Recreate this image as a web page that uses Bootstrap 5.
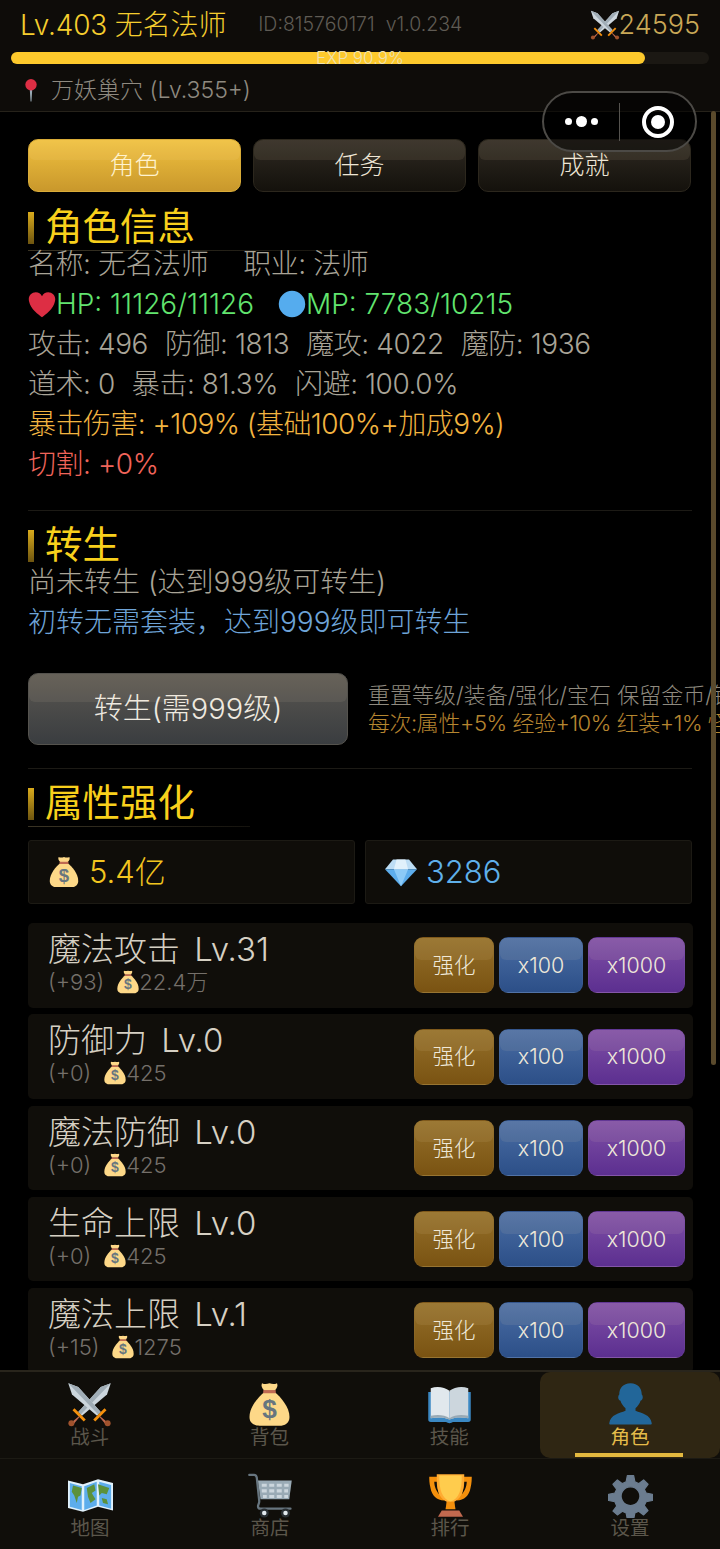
<!DOCTYPE html>
<html lang="zh-CN">
<head>
  <meta charset="UTF-8" />
  <meta name="viewport" content="width=device-width, initial-scale=1.0"/>
  <title>角色</title>
  <link href="https://cdn.jsdelivr.net/npm/bootstrap@5.3.0/dist/css/bootstrap.min.css" rel="stylesheet">
  <style>
    html, body { height: 100%; overflow: hidden; background: #000; }
    body { font-family: Inter, "Noto Sans CJK SC", sans-serif; font-weight: 300; color: #a8a297; }
    .app { width: 720px; height: 1549px; position: relative; overflow: hidden; }
    .head { height: 112px; background: #0e0c09; border-bottom: 1px solid #26221a; padding: 0 20px 0 11px; flex: none; }
    .head-top { height: 50px; padding: 0 0 0 9px; }
    .lv { font-size: 28px; line-height: 40px; color: #f5ce2e; white-space: nowrap; letter-spacing: -.15px; }
    .ids { font-size: 19.5px; color: #5f5b54; margin-left: 32px; white-space: nowrap; }
    .power { font-size: 27px; color: #c9a857; margin-left: auto; }
    .power svg { width: 30px; height: 30px; margin-right: -1px; }
    .exp { height: 12px; width: 698px; margin-top: 2px; background: #1b1813; border-radius: 6px; position: relative; }
    .exp-fill { height: 100%; background: #fdc92c; border-radius: 6px; }
    .exp-txt { position: absolute; left: 0; right: 0; top: -3px; text-align: center; font-size: 17px; line-height: 18px; color: #eee2b2; }
    .loc { font-size: 23px; color: #8f8a80; height: 46px; padding: 6px 0 0 13px; white-space: nowrap; }
    .loc svg { width: 14px; height: 24px; margin-right: 13px; }
    .capsule { position: absolute; left: 542px; top: 91px; width: 155px; height: 61px; border-radius: 31px; border: 2px solid #4c4a46; background: rgba(0,0,0,.55); z-index: 5; }
    .capsule-l { width: 75px; }
    .capsule-r { flex: 1; border-left: 1px solid #55534f; height: 38px; }
    .dots i { display: block; background: #fff; border-radius: 50%; }
    .ring { width: 32px; height: 32px; border: 4px solid #fff; border-radius: 50%; }
    .ring i { display: block; width: 14px; height: 14px; background: #fff; border-radius: 50%; }
    .scrollbar { position: absolute; left: 711px; top: 111px; width: 5px; height: 954px; background: #5a4a2c; border-radius: 3px; z-index: 4; }
    .main { flex: 1; min-height: 0; overflow: hidden; padding: 27px 28px 0; }
    .tab-btn { height: 53px; padding: 0; font-size: 25px; font-weight: 300; border-radius: 10px; color: #eee6d6; border: 1px solid #2c271d; position: relative; overflow: hidden; background: linear-gradient(#2f2a22, #14110c); }
    .tab-btn::before, .shine::before { content: ""; position: absolute; left: 0; right: 0; top: 0; height: 40%; background: rgba(255,235,190,.08); border-radius: 0 0 6px 6px; }
    .tab-btn.on { background: linear-gradient(#f0c13f, #c9982c); border-color: #d9ac38; color: #fff3cf; }
    .tabs { gap: 12px; margin-bottom: 17px; width: 663px; flex: none; }
    .tabs .tab-btn { flex: 1; }
    .sec-title { font-size: 37.5px; line-height: 36px; color: #f8d01c; padding-left: 17px; position: relative; font-weight: 400; height: 41px; flex: none; }
    .sec-title::before { content: ""; position: absolute; left: 0; top: 3px; width: 6px; height: 32px; background: linear-gradient(#d9ab1c, #6e5510); }
    .sec-plain { height: 35px; }
    .sec-rule { height: 1px; width: 332px; background: linear-gradient(90deg, #3a3424, #15130e); margin-bottom: -7px; flex: none; }
    .ln { font-size: 28px; line-height: 40px; height: 40px; white-space: nowrap; color: #a9a497; flex: none; }
    .ln svg { width: 28px; height: 28px; vertical-align: -5px; }
    .stat-gap { gap: 17px; }
    .job-gap { margin-left: 35px; }
    .hp-gap { margin-left: 24px; }
    .tight { letter-spacing: -.45px; }
    .tight-more { letter-spacing: -.55px; }
    .c-hp { color: #62e56f; }
    .c-crit { color: #f2b440; }
    .c-cut { color: #f0645a; }
    .c-tip { color: #6ea4d8; }
    .divider { height: 1px; background: #1c1a15; width: 664px; flex: none; }
    .rebirth { width: 320px; height: 72px; font-size: 29px; font-weight: 300; padding: 0; border-radius: 10px; color: #efeae0; border: 1px solid #55534e; position: relative; overflow: hidden; background: linear-gradient(#5a5751, #3a3d40); flex: none; }
    .rebirth-txt { margin-left: 20px; font-size: 22px; line-height: 28px; white-space: nowrap; width: 320px; color: #8f8a7f; }
    .money { height: 64px; width: 327px; background: #0f0d09; border: 1px solid #1c1a14; border-radius: 3px; font-size: 31px; padding-left: 19px; }
    .money svg { width: 32px; height: 32px; margin-right: 9px; }
    .c-gold { color: #f2c51f; }
    .c-gem { color: #5fb0ea; }
    .up-row { height: 84.5px; margin-bottom: 6.8px; background: #100e0a; border-radius: 5px; padding: 0 8px 0 20px; width: 665px; flex: none; }
    .up-info { align-self: flex-start; padding-top: 8px; }
    .up-name { font-size: 33px; line-height: 36px; color: #d6d0c3; white-space: nowrap; word-spacing: 5px; }
    .up-sub { font-size: 22px; line-height: 26px; margin-top: 2px; color: #75706a; white-space: nowrap; }
    .up-sub svg { width: 24px; height: 24px; vertical-align: -4px; margin-left: 12px; margin-right: -1px; }
    .up-btns { gap: 5px; }
    .up-btn { height: 56px; padding: 0; font-size: 21.5px; font-weight: 300; color: #efe9da; border-radius: 9px; border: 1px solid rgba(255,255,255,.04); position: relative; overflow: hidden; }
    .up-gold { width: 80px; background: linear-gradient(#94702a, #7a5312); }
    .up-blue { width: 84px; background: linear-gradient(#4b6ea4, #2c4f88); }
    .up-purple { width: 97px; background: linear-gradient(#7f50a6, #5c2f90); }
    .tabbar { flex: none; height: 179px; background: #100e0a; border-top: 2px solid #29251c; }
    .bar-row { height: 86px; }
    .bar-row + .bar-row { border-top: 1px solid #1c1a14; height: 91px; }
    .bar-item { width: 180px; color: #5b564b; font-size: 19.5px; line-height: 22px; font-weight: 400; position: relative; padding-top: 10px; }
    .bar-item svg { width: 45px; height: 45px; display: block; margin-bottom: -1px; }
    .bar-row + .bar-row .bar-item { padding-top: 14px; }
    .bar-item.on { color: #e4bb4a; background: #2f2613; border-radius: 10px; margin-left: 1px; }
    .bar-item.on::after { content: ""; position: absolute; left: 35px; width: 108px; bottom: 1px; height: 4px; background: #e4b93f; }
  </style>
</head>
<body>
<svg width="0" height="0" class="position-absolute">
  <symbol id="i-swords" viewBox="0 0 36 36">
    <path fill="#ccd6dd" d="M35 1l-3 9L12 27l-3-3L27 4z"/><path fill="#a0adb6" d="M35 1L11 26l-2-2L27 4z"/>
    <path fill="#ccd6dd" d="M1 1l3 9 20 17 3-3L9 4z"/><path fill="#a0adb6" d="M1 1l24 25 2-2L9 4z"/>
    <path fill="#f4900c" d="M6 21l9 9-1.6 1.6-9-9zM30 21l-9 9 1.6 1.6 9-9z"/>
    <path fill="#c1694f" d="M10 27l-6 5 1 2 5-6zM26 27l6 5-1 2-5-6z"/><circle cx="3.5" cy="33" r="2.4" fill="#a0522d"/><circle cx="32.5" cy="33" r="2.4" fill="#a0522d"/>
  </symbol>
  <symbol id="i-bag" viewBox="0 0 36 36">
    <path fill="#fdd888" d="M12 1c2 1 4 .8 6 0 2 .8 4 1 6 0 1 2 0 4-2 6h-8c-2-2-3-4-2-6z"/>
    <path fill="#fdd888" d="M14 8h8c5 4 12 12 12 20 0 5-4 7-8 7H10c-4 0-8-2-8-7 0-8 7-16 12-20z"/>
    <path fill="#bf6952" d="M13 6.500h10v2.500H13z"/>
    <text x="18" y="29" text-anchor="middle" font-family="Liberation Sans, sans-serif" font-size="21" font-weight="700" fill="#67757f">$</text>
  </symbol>
  <symbol id="i-gem" viewBox="0 0 36 36">
    <path fill="#bdddf4" d="M9 4h18l9 11H0z"/><path fill="#5dadec" d="M0 15h36L18 34z"/><path fill="#8ccaf7" d="M10 15h16l-8 19z"/><path fill="#e1f1fb" d="M13 4h10l3 11H10z"/>
  </symbol>
  <symbol id="i-book" viewBox="0 0 36 36">
    <path fill="#3b88c3" d="M1 8h34v22c0 1.500-1 2-2 2H21c-1 0-2 1-3 1s-2-1-3-1H3c-1 0-2-.5-2-2z"/>
    <path fill="#e1e8ed" d="M3 5c5-2 11-1 15 2v23c-4-2-10-2-15-1z"/><path fill="#ccd6dd" d="M33 5c-5-2-11-1-15 2v23c4-2 10-2 15-1z"/>
    <path fill="#99aab5" d="M3 27c5-1 11-1 15 2 4-3 10-3 15-2v2c-5-1-11-1-15 1-4-2-10-2-15-1z"/>
  </symbol>
  <symbol id="i-bust" viewBox="0 0 36 36">
    <path fill="#269" d="M18 1c6 0 9 4 9 9 1 1 1.500 4-1 5-.5 2-2 4-4 6v2c5 2 12 3 13 10 0 .5 0 1-1 1H2c-1 0-1-.5-1-1 1-7 8-8 13-10v-2c-2-2-3.500-4-4-6-2.500-1-2-4-1-5 0-5 3-9 9-9z"/>
  </symbol>
  <symbol id="i-map" viewBox="0 0 36 36">
    <path fill="#e1f1fb" d="M0 6l12 3 12-4 12 3v22l-12-3-12 4-12-3z"/>
    <path fill="#5dadec" d="M1.500 8l9.500 2.500v19L1.500 27zM13 10.500l10-3.500v19l-10 3.500zM25 7l9.500 2.500v19L25 26z"/>
    <path fill="#5c913b" d="M4 10l7 2-1 6-2 1-1 5-2-6-2-3zM15 12l6-3 1 5-3 2 3 5-4 3-2-5zM24 9l9 3-2 5-4-1-2 2zM27 20l4 1 1 4-4-1z"/>
  </symbol>
  <symbol id="i-cart" viewBox="0 0 36 36">
    <path fill="none" stroke="#67757f" stroke-width="1.800" stroke-linecap="round" d="M1 1.500h4c1 0 1.500.5 2 2l2 19c0 2-1 3-1 4 0 1.500 1 2 2 2h24"/>
    <path fill="#99aab5" d="M8 6h27l-2 15H10z"/>
    <path fill="#ccd6dd" d="M11 8.500h4v2.500h-4zM17 8.500h4v2.500h-4zM23 8.500h4v2.500h-4zM29 8.500h3.500v2.500h-3.500zM11 13h4v2.500h-4zM17 13h4v2.500h-4zM23 13h4v2.500h-4zM29 13h3v2.500h-3zM12 17.500h3V20h-3zM17 17.500h4V20h-4zM23 17.500h4V20h-4zM29 17.500h3V20h-3z"/>
    <circle cx="13" cy="32" r="3.600" fill="#292f33"/><circle cx="13" cy="32" r="1.800" fill="#e1e8ed"/><circle cx="30" cy="32" r="3.600" fill="#292f33"/><circle cx="30" cy="32" r="1.800" fill="#e1e8ed"/>
  </symbol>
  <symbol id="i-cup" viewBox="0 0 36 36">
    <path fill="#f4900c" d="M1 3h8v2c0 7 1 13 4 14v3c-6 0-10-4-11-10C1 8 1 5 1 3zM35 3h-8v2c0 7-1 13-4 14v3c6 0 10-4 11-10 1-4 1-7 1-9z"/>
    <path fill="#100e0a" d="M5 7l2 0c0 4 1 7 2 10-2-2-4-6-4-10zM31 7h-2c0 4-1 7-2 10 2-2 4-6 4-10z"/>
    <path fill="#ffac33" d="M7 1h22c0 14-2 19-8 22v4h-6v-4C9 20 7 15 7 1z"/>
    <path fill="#ffcc4d" d="M9 2h18c0 12-2 18-9 21C11 20 9 14 9 2z"/>
    <path fill="#f4900c" d="M15 23h6l1 6h-8z"/><path fill="#c1694f" d="M11 30h14l3 5H8z"/>
  </symbol>
  <symbol id="i-gear" viewBox="0 0 36 36">
    <path fill="#6b7c8f" stroke="#6b7c8f" stroke-linejoin="round" fill-rule="evenodd" d="M15.500 2h5l1 5 3 1.500 4-3 3.500 3.500-3 4 1.500 3 5 1v5l-5 1-1.500 3 3 4-3.500 3.500-4-3-3 1.500-1 5h-5l-1-5-3-1.500-4 3L4 30.500l3-4L5.500 23l-5-1v-5l5-1L7 13 4 9l3.500-3.500 4 3 3-1.500zM18 11a7.500 7.500 0 1 0 .01 0z"/>
  </symbol>
  <symbol id="i-heart" viewBox="0 0 36 36">
    <path fill="#dd2e44" d="M35 12c0-5-4-9-9-9-3.500 0-6.500 2-8 5-1.500-3-4.500-5-8-5-5 0-9 4-9 9 0 1 .2 2 .5 3C3 24 14 32 18 35c4-3 15-11 16.500-20 .3-1 .5-2 .5-3z"/>
  </symbol>
  <symbol id="i-blue" viewBox="0 0 36 36"><circle cx="18" cy="18" r="17" fill="#55acee"/></symbol>
  <symbol id="i-pin" viewBox="0 0 16 26">
    <path fill="#99aab5" d="M6.500 10h3L8.500 26h-1z"/><circle cx="8" cy="7" r="6.500" fill="#dd2e44"/>
  </symbol>
</svg>

<div class="app d-flex flex-column">
  <header class="head">
    <div class="head-top d-flex align-items-center">
      <span class="lv">Lv.403 无名法师</span>
      <span class="ids">ID:815760171&nbsp; v1.0.234</span>
      <span class="power d-flex align-items-center"><svg><use href="#i-swords"/></svg>24595</span>
    </div>
    <div class="exp">
      <div class="exp-fill" style="width: 90.9%"></div>
      <div class="exp-txt">EXP 90.9%</div>
    </div>
    <div class="loc d-flex align-items-center"><svg><use href="#i-pin"/></svg>万妖巢穴 (Lv.355+)</div>
  </header>

  <div class="capsule d-flex align-items-center">
    <div class="capsule-l dots d-flex align-items-center justify-content-center gap-1">
      <i style="width: 7px; height: 7px"></i><i style="width: 11px; height: 11px"></i><i style="width: 7px; height: 7px"></i>
    </div>
    <div class="capsule-r d-flex align-items-center justify-content-center">
      <div class="ring d-flex align-items-center justify-content-center"><i></i></div>
    </div>
  </div>
  <div class="scrollbar"></div>

  <main class="main d-flex flex-column">
    <div class="tabs d-flex">
      <button class="btn tab-btn on" type="button">角色</button>
      <button class="btn tab-btn" type="button">任务</button>
      <button class="btn tab-btn" type="button">成就</button>
    </div>

    <div class="sec-title">角色信息</div>
    <div class="sec-rule"></div>
    <div class="ln tight d-flex"><span>名称: 无名法师</span><span class="job-gap">职业: 法师</span></div>
    <div class="ln c-hp d-flex align-items-center"><svg><use href="#i-heart"/></svg><span>HP: 11126/11126</span><svg class="hp-gap"><use href="#i-blue"/></svg><span>MP: 7783/10215</span></div>
    <div class="ln tight d-flex stat-gap"><span>攻击: 496</span><span>防御: 1813</span><span>魔攻: 4022</span><span>魔防: 1936</span></div>
    <div class="ln tight d-flex stat-gap"><span>道术: 0</span><span>暴击: 81.3%</span><span>闪避: 100.0%</span></div>
    <div class="ln c-crit tight-more">暴击伤害: +109% (基础100%+加成9%)</div>
    <div class="ln c-cut tight">切割: +0%</div>

    <div class="divider" style="margin-top: 26px; margin-bottom: 16px"></div>
    <div class="sec-title sec-plain">转生</div>
    <div class="ln">尚未转生 (达到999级可转生)</div>
    <div class="ln c-tip">初转无需套装，达到999级即可转生</div>

    <div class="d-flex align-items-center" style="margin-top: 31px">
      <button class="btn rebirth shine" type="button">转生(需999级)</button>
      <div class="rebirth-txt">
        <div>重置等级/装备/强化/宝石 保留金币/钻石</div>
        <div class="c-crit opacity-75 tight">每次:属性+5% 经验+10% 红装+1% 怪物+5%</div>
      </div>
    </div>

    <div class="divider" style="margin-top: 23px; margin-bottom: 16px"></div>
    <div class="sec-title">属性强化</div>
    <div class="sec-rule" style="width: 222px; margin-bottom: 0"></div>
    <div class="d-flex" style="gap: 10px; margin-top: 13px; margin-bottom: 19px">
      <div class="money d-flex align-items-center c-gold"><svg><use href="#i-bag"/></svg>5.4亿</div>
      <div class="money d-flex align-items-center c-gem"><svg><use href="#i-gem"/></svg>3286</div>
    </div>

    <div class="up-row d-flex align-items-center justify-content-between">
      <div class="up-info"><div class="up-name">魔法攻击 Lv.31</div><div class="up-sub">(+93)<svg><use href="#i-bag"/></svg>22.4万</div></div>
      <div class="d-flex up-btns"><button class="btn up-btn up-gold shine" type="button">强化</button><button class="btn up-btn up-blue shine" type="button">x100</button><button class="btn up-btn up-purple shine" type="button">x1000</button></div>
    </div>
    <div class="up-row d-flex align-items-center justify-content-between">
      <div class="up-info"><div class="up-name">防御力 Lv.0</div><div class="up-sub">(+0)<svg><use href="#i-bag"/></svg>425</div></div>
      <div class="d-flex up-btns"><button class="btn up-btn up-gold shine" type="button">强化</button><button class="btn up-btn up-blue shine" type="button">x100</button><button class="btn up-btn up-purple shine" type="button">x1000</button></div>
    </div>
    <div class="up-row d-flex align-items-center justify-content-between">
      <div class="up-info"><div class="up-name">魔法防御 Lv.0</div><div class="up-sub">(+0)<svg><use href="#i-bag"/></svg>425</div></div>
      <div class="d-flex up-btns"><button class="btn up-btn up-gold shine" type="button">强化</button><button class="btn up-btn up-blue shine" type="button">x100</button><button class="btn up-btn up-purple shine" type="button">x1000</button></div>
    </div>
    <div class="up-row d-flex align-items-center justify-content-between">
      <div class="up-info"><div class="up-name">生命上限 Lv.0</div><div class="up-sub">(+0)<svg><use href="#i-bag"/></svg>425</div></div>
      <div class="d-flex up-btns"><button class="btn up-btn up-gold shine" type="button">强化</button><button class="btn up-btn up-blue shine" type="button">x100</button><button class="btn up-btn up-purple shine" type="button">x1000</button></div>
    </div>
    <div class="up-row d-flex align-items-center justify-content-between">
      <div class="up-info"><div class="up-name">魔法上限 Lv.1</div><div class="up-sub">(+15)<svg><use href="#i-bag"/></svg>1275</div></div>
      <div class="d-flex up-btns"><button class="btn up-btn up-gold shine" type="button">强化</button><button class="btn up-btn up-blue shine" type="button">x100</button><button class="btn up-btn up-purple shine" type="button">x1000</button></div>
    </div>
  </main>

  <nav class="tabbar">
    <div class="bar-row d-flex">
      <div class="bar-item d-flex flex-column align-items-center"><svg><use href="#i-swords"/></svg>战斗</div>
      <div class="bar-item d-flex flex-column align-items-center"><svg><use href="#i-bag"/></svg>背包</div>
      <div class="bar-item d-flex flex-column align-items-center"><svg><use href="#i-book"/></svg>技能</div>
      <div class="bar-item on d-flex flex-column align-items-center"><svg><use href="#i-bust"/></svg>角色</div>
    </div>
    <div class="bar-row d-flex">
      <div class="bar-item d-flex flex-column align-items-center"><svg><use href="#i-map"/></svg>地图</div>
      <div class="bar-item d-flex flex-column align-items-center"><svg><use href="#i-cart"/></svg>商店</div>
      <div class="bar-item d-flex flex-column align-items-center"><svg><use href="#i-cup"/></svg>排行</div>
      <div class="bar-item d-flex flex-column align-items-center"><svg><use href="#i-gear"/></svg>设置</div>
    </div>
  </nav>
</div>
</body>
</html>
